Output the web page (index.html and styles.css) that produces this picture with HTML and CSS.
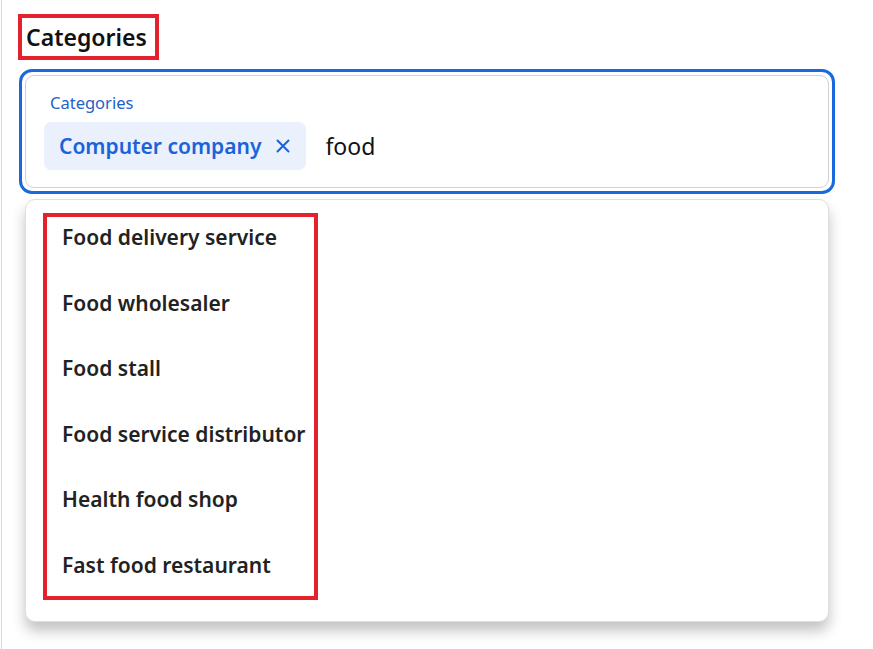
FILE: index.html
```html
<!DOCTYPE html>
<html lang="en">
<head>
<meta charset="utf-8">
<title>Categories</title>
<link rel="stylesheet" href="styles.css">
</head>
<body>
<div class="page">
  <div class="heading-box"><h1 class="heading">Categories</h1></div>
  <div class="field-ring">
    <div class="field">
      <div class="field-label">Categories</div>
      <div class="field-row">
        <span class="chip">
          <span class="chip-text">Computer company</span>
          <svg class="chip-x" width="14" height="14" viewBox="0 0 14 14" aria-hidden="true">
            <path d="M1.5 1.5 L12.5 12.5 M12.5 1.5 L1.5 12.5" stroke="currentColor" stroke-width="2" stroke-linecap="round" fill="none"/>
          </svg>
        </span>
        <span class="query">food</span>
      </div>
    </div>
  </div>
  <div class="dropdown">
    <ul class="options">
      <li class="option">Food delivery service</li>
      <li class="option">Food wholesaler</li>
      <li class="option">Food stall</li>
      <li class="option">Food service distributor</li>
      <li class="option">Health food shop</li>
      <li class="option">Fast food restaurant</li>
    </ul>
  </div>
</div>
</body>
</html>
```

FILE: styles.css
```css
* { box-sizing: border-box; }
html, body { margin: 0; padding: 0; background: #ffffff; }
body {
  font-family: "Segoe UI", "Noto Sans", "Open Sans", sans-serif;
  color: #111;
}
.page {
  margin-left: 1px;
  border-left: 1px solid #d9d9d9;
  min-height: 649px;
  padding-top: 14px;
}
.heading-box {
  margin-left: 16px;
  width: 141px;
  height: 46px;
  border: 4px solid #e2232d;
  padding-left: 4px;
}
.heading {
  margin: 0;
  font-size: 23px;
  font-weight: 600;
  line-height: 38px;
  color: #111;
  white-space: nowrap;
}
.field-ring {
  margin-top: 9px;
  margin-left: 17px;
  width: 816px;
  border: 3px solid #1a68de;
  border-radius: 13px;
  padding: 3px;
}
.field {
  border: 1px solid #d2d2d2;
  border-radius: 9px;
  padding: 17px 18px 17px 18px;
  height: 113px;
}
.field-label {
  padding-left: 6px;
  font-size: 16.5px;
  line-height: 20px;
  color: #1d62c9;
}
.field-row {
  margin-top: 9px;
  display: flex;
  align-items: center;
  gap: 19px;
}
.chip {
  display: inline-flex;
  align-items: center;
  gap: 15px;
  height: 48px;
  padding: 0 16px 0 15px;
  background: #eaf1fd;
  border-radius: 7px;
  color: #1a63d8;
}
.chip-text {
  font-size: 21px;
  font-weight: 600;
  white-space: nowrap;
}
.chip-x { display: block; color: #1a63d8; }
.query {
  font-size: 23px;
  color: #111;
}
.dropdown {
  margin-top: 5px;
  margin-left: 23px;
  width: 804px;
  height: 423px;
  border: 1px solid #dedede;
  border-radius: 10px;
  background: #fff;
  padding: 13px 0 0 17px;
  box-shadow: 0 9px 14px rgba(0, 0, 0, 0.24);
}
.options {
  list-style: none;
  margin: 0;
  width: 275px;
  height: 387px;
  border: 4px solid #e2232d;
  padding: 7px 0 0 15px;
  display: flex;
  flex-direction: column;
  gap: 39.6px;
}
.option {
  font-size: 21px;
  font-weight: 600;
  line-height: 26px;
  color: #222;
  white-space: nowrap;
}
```
